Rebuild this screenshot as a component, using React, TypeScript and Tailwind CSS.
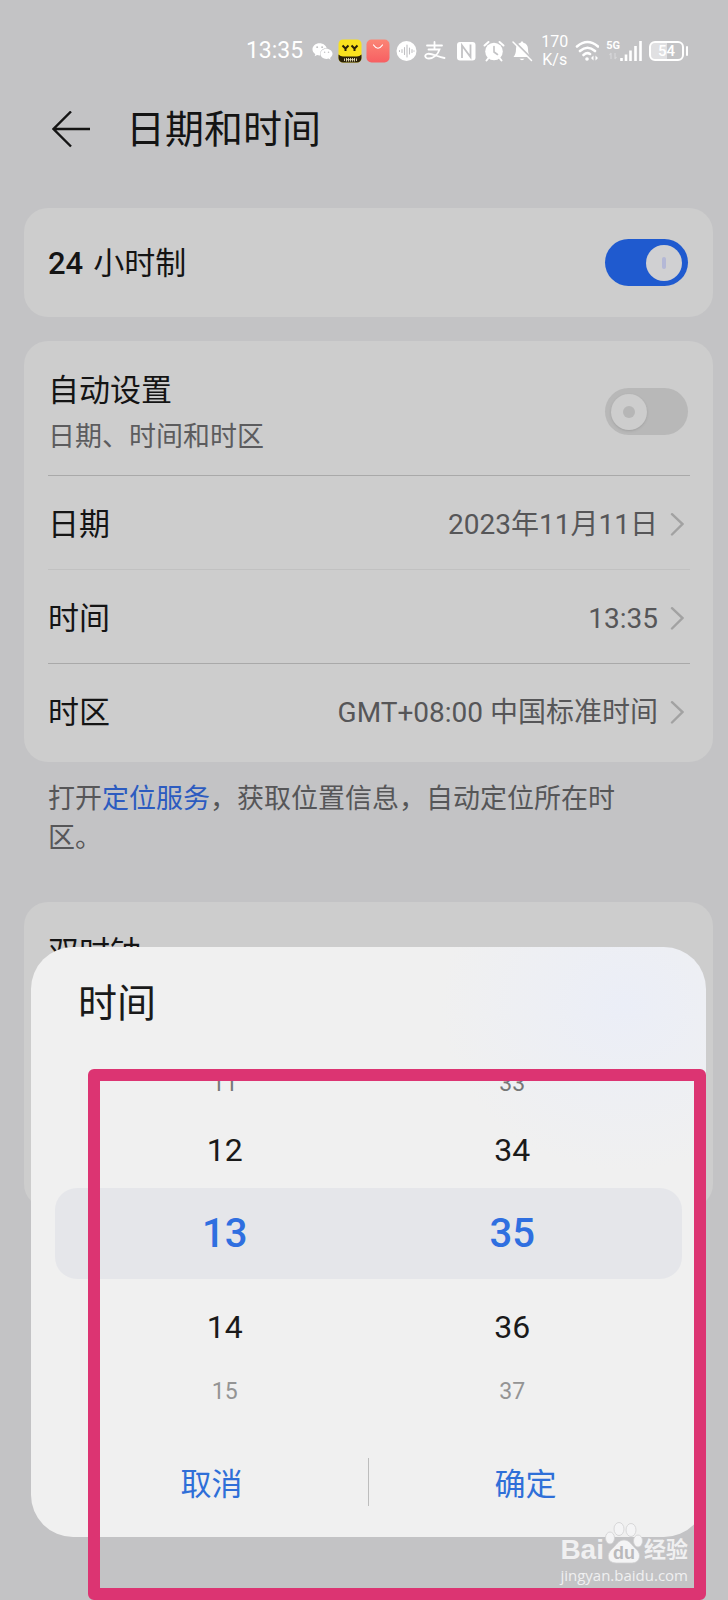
import { useState } from 'react';
import { FaWeixin } from 'react-icons/fa';

interface SwitchProps {
    id: string;
    label: string;
    checked: boolean;
    onChange: (value: boolean) => void;
}

const rows = [
    { name: '日期', value: '2023年11月11日', border: 'border-b border-[#c1c1c1]' },
    { name: '时间', value: '13:35', border: 'border-b border-[#a9a9a9]' },
    { name: '时区', value: 'GMT+08:00 中国标准时间', border: '' },
];

const wheel = [
    { hour: '11', minute: '33', style: 'h-14 text-[23px] text-[#777777]' },
    { hour: '12', minute: '34', style: 'h-[76px] text-[32px] text-[#1a1a1a]' },
    { hour: '13', minute: '35', style: 'h-[91px] text-[40px] font-medium text-[#2f6fe0] bg-[#e5e6ea] rounded-[22px]' },
    { hour: '14', minute: '36', style: 'h-24 text-[32px] text-[#1a1a1a]' },
    { hour: '15', minute: '37', style: 'h-8 text-[23px] text-[#949494]' },
];

const Switch = ({ id, label, checked, onChange }: SwitchProps) => (
    <span className="relative flex shrink-0">
        <input
            id={id}
            type="checkbox"
            role="switch"
            aria-label={label}
            checked={checked}
            onChange={e => onChange(e.target.checked)}
            className="appearance-none w-[83px] h-[47px] rounded-full bg-[#b8b8b8] checked:bg-[#1f5acf]"
        />
        <span
            className={
                checked
                    ? 'pointer-events-none absolute top-1.5 right-1.5 size-9 rounded-full bg-[#d0d0d2] flex items-center justify-center'
                    : 'pointer-events-none absolute top-1.5 left-1.5 size-9 rounded-full bg-[#cdcdcd] shadow flex items-center justify-center'
            }
        >
            <span className={checked ? 'w-1 h-3 rounded-full bg-[#b4b8d6]' : 'size-3 rounded-full bg-[#b6b6b6]'} />
        </span>
    </span>
);

const StatusBar = () => (
    <div className="flex items-center justify-end gap-[7px] pt-[33px] pr-10 text-white">
        <span className="text-[23px] leading-6">13:35</span>
        <div className="flex items-center gap-1">
            <span className="flex w-6 justify-center">
                <FaWeixin size={21} />
            </span>

            {/* Yellow face app */}
            <svg className="size-6" viewBox="0 0 24 24">
                <rect x="0.5" y="0.5" width="23" height="23" rx="4.5" fill="#f9e11e" />
                <path d="M0.5 15.500 Q3 18 6 17.500 H18 Q21 18 23.500 15.500 V19 A4.500 4.500 0 0 1 19 23.500 H5 A4.500 4.500 0 0 1 0.5 19 Z" fill="#2a2008" />
                <path d="M4.500 6.500 L7.500 9.500 L10.500 6.500 M7.500 9.500 V12 M13.500 6.500 L16.500 9.500 L19.500 6.500 M16.500 9.500 V12" fill="none" stroke="#2a2008" strokeWidth="2" />
                <path d="M6.500 19.500 V22 M8.500 19 V22.500 M10.500 19 V22.500 M12.500 19 V22.500 M14.500 19 V22.500 M16.500 19 V22.500 M18.500 19.500 V22 M8 20.700 H17" stroke="#e8dfb8" strokeWidth="0.900" />
            </svg>

            {/* App market */}
            <svg className="size-6" viewBox="0 0 24 24">
                <defs>
                    <linearGradient id="market" x1="0" y1="0" x2="0" y2="1">
                        <stop offset="0" stopColor="#fb8575" />
                        <stop offset="1" stopColor="#f75f62" />
                    </linearGradient>
                </defs>
                <rect x="0.5" y="0.5" width="23" height="23" rx="5" fill="url(#market)" />
                <path d="M7.500 6 Q12 12.500 16.500 6" fill="none" stroke="#fff" strokeWidth="1.200" strokeLinecap="round" />
            </svg>

            {/* Voice */}
            <svg className="size-6" viewBox="0 0 24 24">
                <circle cx="12.500" cy="12" r="10" fill="#fff" />
                <path d="M5.500 11.500 V12.500 M8 10.500 V13.500 M10.500 8.500 V15.500 M13 6 V18 M15.500 9 V15 M18 10.500 V13.500 M20 11.700 V12.300" stroke="#c0c0c3" strokeWidth="1.100" strokeLinecap="round" />
            </svg>

            {/* Alipay */}
            <svg className="size-6" viewBox="0 0 24 24" fill="none" stroke="#fff" strokeWidth="1.800" strokeLinecap="round">
                <path d="M5 6.500 H20 M12.500 3 V10.500 M6.500 10.500 H17.500 C16 15.500 11.500 19.500 7 19.500 C3 19.500 2 16.300 5 15 C9 13.400 15 17.800 22.500 19" />
            </svg>

            {/* NFC */}
            <svg className="ml-1 size-6" viewBox="0 0 24 24">
                <rect x="3" y="3" width="18.500" height="18.500" rx="3" fill="#fff" />
                <path d="M8 19 V6.500 L16.500 18 V5.500" fill="none" stroke="#c3c3c5" strokeWidth="1.800" />
            </svg>

            {/* Alarm */}
            <svg className="size-6" viewBox="0 0 24 24">
                <circle cx="12" cy="12.500" r="8.800" fill="#fff" />
                <path d="M2.500 6.500 L6.500 3 M21.500 6.500 L17.500 3 M6.500 19 L4.500 21.500 M17.500 19 L19.500 21.500" stroke="#fff" strokeWidth="2" strokeLinecap="round" />
                <path d="M12 7.500 V13 L15.500 15.500" fill="none" stroke="#c3c3c5" strokeWidth="1.600" strokeLinecap="round" />
            </svg>

            {/* Muted bell */}
            <svg className="size-6" viewBox="0 0 24 24">
                <path d="M12 2.500 C12.800 2.500 13.300 3 13.300 3.800 C16.500 4.500 18 7 18 10 C18 14 19 16 20.500 18 H3.500 C5 16 6 14 6 10 C6 7 7.500 4.500 10.700 3.800 C10.700 3 11.200 2.500 12 2.500 Z M9.500 19.800 H14.500 Q12 22.500 9.500 19.800 Z" fill="#fff" />
                <path d="M4.500 2.500 L22.500 20.500" stroke="#c3c3c5" strokeWidth="2" />
                <path d="M3 3 L21.500 21.500" stroke="#fff" strokeWidth="1.500" strokeLinecap="round" />
            </svg>
        </div>

        <div className="text-center text-[16px] leading-[18px]">
            <div>170</div>
            <div>K/s</div>
        </div>

        <svg className="size-6" viewBox="0 0 24 24" fill="none" stroke="#fff" strokeWidth="2.600" strokeLinecap="round">
            <path d="M2 7.500 Q12.500 -1.500 23 7.500 M5 12 Q12.500 5.500 20 12 M8.500 16 Q12 13 15 15" />
            <circle cx="12" cy="20" r="1.800" fill="#fff" stroke="none" />
            <path d="M18.500 16.500 L16 19 L18.500 21.500 Z M20.500 16.500 L23 19 L20.500 21.500 Z" fill="#fff" stroke="none" />
        </svg>

        <div className="flex items-start">
            <div className="flex flex-col items-center">
                <span className="text-[11px] leading-3 font-bold">5G</span>
                <svg className="w-2 h-2" viewBox="0 0 8 8">
                    <path d="M2 1 V7 M6 1 V7 M0.500 3 L2 1 M7.500 5 L6 7" fill="none" stroke="#d6d6d8" strokeWidth="1.200" />
                </svg>
            </div>
            <svg className="w-[22px] h-[22px]" viewBox="0 0 22 22">
                <path d="M1.500 18 V21 M6 14.500 V21 M10.500 10.500 V21 M15.500 6 V21 M20.500 1 V21" stroke="#fff" strokeWidth="2.600" />
            </svg>
        </div>

        <div className="flex items-center gap-[2px]">
            <div className="flex h-5 w-[35px] items-center justify-center rounded-md border-2 border-white bg-linear-to-r from-[#e0e0e2] from-50% to-transparent to-50% text-[15px] leading-4 font-medium">
                54
            </div>
            <div className="h-2.5 w-[2px] rounded-sm bg-white" />
        </div>
    </div>
);

const Watermark = () => (
    <div className="pointer-events-none absolute right-10 bottom-3.5 flex flex-col text-[#f0f0f1]">
        <div className="flex items-end justify-between">
            <span className="font-['Liberation_Sans',sans-serif] text-[28px] leading-7 font-bold">Bai</span>
            <svg className="w-[38px] h-[42px]" viewBox="0 0 38 42">
                <g fill="#f4f4f5" stroke="#d0d0d2" strokeWidth="0.800">
                    <ellipse cx="5" cy="16" rx="4.500" ry="6" />
                    <ellipse cx="14" cy="7" rx="5" ry="6.500" />
                    <ellipse cx="26" cy="8" rx="5" ry="6.500" />
                    <ellipse cx="33" cy="19" rx="4.500" ry="6" />
                    <path d="M19 18 C25 18 27 24 31 27 C37 32 35 41 27 41 C22 41 16 41 11 41 C2 41 1 32 7 27 C11 24 13 18 19 18 Z" />
                </g>
                <text x="19" y="37" textAnchor="middle" fontFamily="Liberation Sans, sans-serif" fontSize="18" fontWeight="700" fill="#b9b9bb">du</text>
            </svg>
            <span className="text-[22px] leading-7 font-bold">经验</span>
        </div>
        <span className="font-['Open_Sans',sans-serif] text-[15px] leading-[22px]">jingyan.baidu.com</span>
    </div>
);

const TimeDialog = () => (
    <div
        role="dialog"
        aria-labelledby="dialog-title"
        className="absolute bottom-[63px] left-[31px] right-[22px] rounded-[42px] bg-[#f0f0f0] bg-radial-[at_88%_10%] from-[#ebeef7] to-[#f0f0f0] to-22% pt-[29px] pb-[31px]"
    >
        <h2 id="dialog-title" className="px-[47px] text-[39px] leading-14 text-[#1a1a1a]">时间</h2>

        <div className="mt-6">
            {wheel.map(w => (
                <div key={w.hour} className={`mx-6 px-[26px] grid grid-cols-2 items-center text-center ${w.style}`}>
                    <span>{w.hour}</span>
                    <span>{w.minute}</span>
                </div>
            ))}
        </div>

        <div className="mt-[51px] mx-6 flex h-12 divide-x divide-[#bdbdbd] text-[31px] text-[#2f6fd8]">
            <button type="button" className="flex-1 pt-1">取消</button>
            <button type="button" className="flex-1 pt-1">确定</button>
        </div>

        {/* Highlight frame around the wheels and the buttons */}
        <div className="pointer-events-none absolute top-[122px] -bottom-[63px] left-[57px] right-0 rounded-md border-12 border-[#dc3472]" />
    </div>
);

export default function App() {
    const [hour24, setHour24] = useState(true);
    const [auto, setAuto] = useState(false);

    return (
        <div className="relative min-h-screen overflow-hidden bg-[#c3c3c5] font-['Roboto','Noto_Sans_CJK_SC',sans-serif] text-[#141414]">
            <StatusBar />

            <header className="mt-[33px] flex items-center gap-9 pl-[52px]">
                <button type="button" aria-label="返回">
                    <svg className="size-[38px]" viewBox="0 0 38 38" fill="none" stroke="#141414" strokeWidth="2.400">
                        <path d="M38 18 H2 M19 0.500 L1.500 18 L19 35.500" />
                    </svg>
                </button>
                <h1 className="text-[39px] leading-14">日期和时间</h1>
            </header>

            <main className="mt-[50px] pl-6 pr-[15px]">
                <section className="flex items-center justify-between rounded-3xl bg-[#cdcdcd] py-[31px] pl-6 pr-[25px]">
                    <label htmlFor="hour24" className="flex gap-2.5 pt-[2px] text-[31px] leading-[45px]">
                        <span className="font-medium">24</span>
                        <span>小时制</span>
                    </label>
                    <Switch id="hour24" label="24 小时制" checked={hour24} onChange={setHour24} />
                </section>

                <section className="mt-6 rounded-3xl bg-[#cdcdcd] pb-[5px] pl-6 pr-[23px]">
                    <div className="flex items-center justify-between border-b border-[#a9a9a9] pt-6 pb-[18px] pr-[2px]">
                        <label htmlFor="auto">
                            <span className="block text-[31px] leading-[52px]">自动设置</span>
                            <span className="block text-[27px] leading-10 text-[#5c5c5e]">日期、时间和时区</span>
                        </label>
                        <Switch id="auto" label="自动设置" checked={auto} onChange={setAuto} />
                    </div>

                    {rows.map(row => (
                        <button
                            key={row.name}
                            type="button"
                            className={`flex w-full items-center pt-[26px] pb-[22px] pr-1.5 text-left leading-[45px] ${row.border}`}
                        >
                            <span className="flex-1 text-[31px]">{row.name}</span>
                            <span className="text-[28px] text-[#565658]">{row.value}</span>
                            <svg className="ml-3 w-3.5 h-6" viewBox="0 0 14 24" fill="none" stroke="#a2a2a2" strokeWidth="2.400" strokeLinecap="round">
                                <path d="M2 1.200 L12.500 11 L2 21.500" />
                            </svg>
                        </button>
                    ))}
                </section>

                <p className="mt-[18px] pl-6 pr-[65px] text-[27px] leading-[39px] text-[#565658]">
                    打开<a href="#location" className="text-[#2c5bc0]">定位服务</a>，获取位置信息，自动定位所在时区。
                </p>

                <section className="mt-11 min-h-[306px] rounded-3xl bg-[#cdcdcd] px-6 pt-7">
                    <div className="text-[31px] leading-[45px]">双时钟</div>
                </section>
            </main>

            <TimeDialog />
            <Watermark />
        </div>
    );
}
